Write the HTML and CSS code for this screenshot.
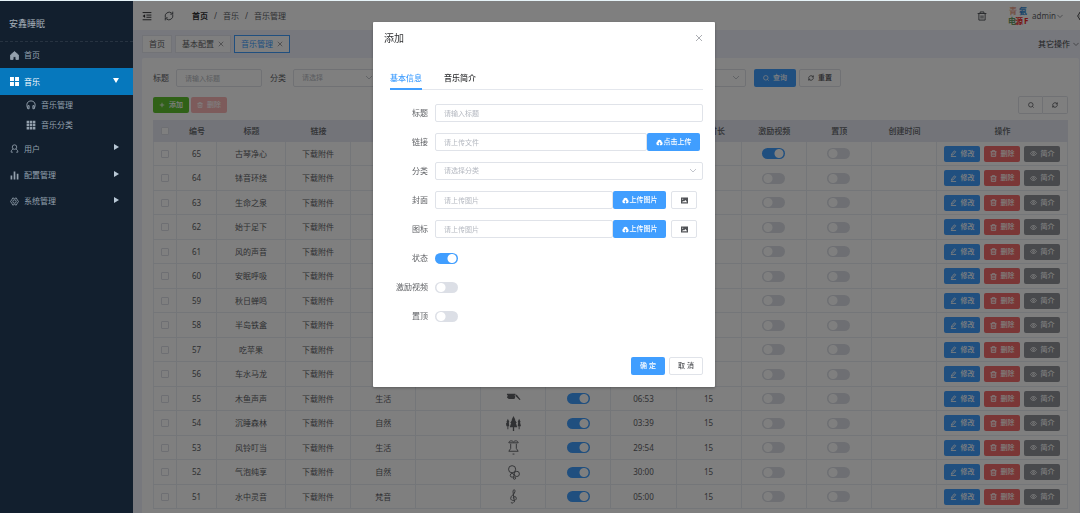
FILE: index.html
```
<!DOCTYPE html>
<html lang="zh-CN">
<head>
<meta charset="utf-8">
<title>音乐管理</title>
<link rel="stylesheet" href="styles.css">
</head>
<body>
<svg class="sprite" aria-hidden="true">
  <symbol id="home" viewBox="0 0 16 16"><path fill="currentColor" d="M8 1 1 7v8h4.500v-5h5v5H15V7z"/></symbol>
  <symbol id="grid4" viewBox="0 0 16 16"><path fill="currentColor" stroke="none" d="M0 0h7v7H0zM9 0h7v7H9zM0 9h7v7H0zM9 9h7v7H9z"/></symbol>
  <symbol id="grid9" viewBox="0 0 16 16"><path fill="currentColor" stroke="none" d="M1 1h4v4H1zM6 1h4v4H6zM11 1h4v4h-4zM1 6h4v4H1zM6 6h4v4H6zM11 6h4v4h-4zM1 11h4v4H1zM6 11h4v4H6zM11 11h4v4h-4z"/></symbol>
  <symbol id="phones" viewBox="0 0 16 16"><path d="M3 14C-1 6 3 1.500 8 1.500S17 6 13 14M3 9h2v5H3zM11 9h2v5h-2z"/></symbol>
  <symbol id="user" viewBox="0 0 16 16"><circle cx="8" cy="5.500" r="4"/><path d="M5.500 9C3 10 2 12 2 14.500h3M10.500 9c2.500 1 3.500 3 3.500 5.500h-3"/></symbol>
  <symbol id="bars" viewBox="0 0 16 16"><path fill="currentColor" stroke="none" d="M1 8h3v7H1zM6.500 1h3v14h-3zM12 5h3v10h-3z"/></symbol>
  <symbol id="gear" viewBox="0 0 16 16"><path d="M5 1.500 8 3l3-1.500L13 5l2 3-2 3-2 3.500L8 13l-3 1.500L3 11 1 8l2-3z"/><circle cx="8" cy="8" r="3"/></symbol>
  <symbol id="fold" viewBox="0 0 16 16"><path d="M1 2.500h14M7 6.500h8M7 10h8M1 14h14"/><path fill="currentColor" stroke="none" d="M5 5v6L1 8z"/></symbol>
  <symbol id="refresh" viewBox="0 0 16 16"><path d="M2 10A6.500 6.500 0 0 1 12 3l2 2M14 6A6.500 6.500 0 0 1 4 13l-2-2M14 1v4h-4M2 15v-4h4"/></symbol>
  <symbol id="trash" viewBox="0 0 16 16"><path d="M1 4h14M5 4V1.500h6V4M3 4v10.500h10V4M6.500 7v5M9.500 7v5"/></symbol>
  <symbol id="down" viewBox="0 0 16 16"><path d="m1 5 7 7 7-7"/></symbol>
  <symbol id="close" viewBox="0 0 16 16"><path d="m2 2 12 12M14 2 2 14"/></symbol>
  <symbol id="plus" viewBox="0 0 16 16"><path d="M8 2v12M2 8h12"/></symbol>
  <symbol id="search" viewBox="0 0 16 16"><circle cx="7.500" cy="7.500" r="6"/><path d="m12 12 3 3"/></symbol>
  <symbol id="edit" viewBox="0 0 16 16"><path d="m4 9 6-7 3 2-6 7-4 1zM2 15h12"/></symbol>
  <symbol id="eye" viewBox="0 0 16 16"><path d="M1 8c4-6 10-6 14 0-4 6-10 6-14 0z"/><circle cx="8" cy="8" r="2"/></symbol>
  <symbol id="cloud" viewBox="0 0 16 16"><path fill="currentColor" stroke="none" fill-rule="evenodd" d="M4 14a4 4 0 0 1-1-7.500 5 5 0 0 1 10 0A4 4 0 0 1 12 14zM7 14h2v-3h2L8 7l-3 4h2z"/></symbol>
  <symbol id="picture" viewBox="0 0 16 16"><path fill="currentColor" stroke="none" fill-rule="evenodd" d="M0 1h16v14H0zM2 12h12l-4-5-3 3-2-1zM3 4v2h2V4z"/></symbol>
  <symbol id="woodfish" viewBox="0 0 16 16"><path fill="currentColor" stroke="none" d="M1 3h9v1.500H9L10 6 9 8.500H3L1 7l1-2.500H1zM10 4h1.500l4 5-1 .5-4-4z"/></symbol>
  <symbol id="forest" viewBox="0 0 16 16"><path fill="currentColor" stroke="none" d="m8 0 2 4h-.5l2 3.500h-1L12 12H8.700v4H7.300v-4H4l1.500-4.500h-1L6.500 4H6zM2 3l1.500 3-.5 1 .5 4h-1v3h-1v-3h-1L0 8l1-1-.5-1zM14 3l1.500 3-.5 1 1 4h-1.500v3h-1v-3h-1l.5-4-.5-1z"/></symbol>
  <symbol id="bell" viewBox="0 0 16 16"><path d="M8 2c-2-2-5-1-5 1h10c0-2-3-3-5-1M5 4v5l-2 3h10l-2-3V4M7 15h2"/></symbol>
  <symbol id="bubbles" viewBox="0 0 16 16"><circle cx="6.500" cy="4.500" r="3.800"/><circle cx="11.500" cy="9.500" r="2.800"/><circle cx="6.500" cy="11" r="2"/><circle cx="9" cy="14" r="1.200"/></symbol>
  <symbol id="clef" viewBox="0 0 16 16"><path d="M8 14c-1 2-3 1-2 0M9 14 7.500 3C7.500 0 10 0 9.500 3S5 7 5 10c0 3 6 3 6 0s-4-2-3 0"/></symbol>
</svg>

<div class="app">
  <aside class="sidebar">
    <div class="brand">安鑫睡眠</div>
    <nav class="menu">
      <a class="item" href="#"><svg class="icon"><use href="#home"/></svg>首页</a>
      <a class="item active" href="#"><svg class="icon"><use href="#grid4"/></svg>音乐<i class="arrow open"></i></a>
      <a class="item sub" href="#"><svg class="icon"><use href="#phones"/></svg>音乐管理</a>
      <a class="item sub" href="#"><svg class="icon"><use href="#grid9"/></svg>音乐分类</a>
      <a class="item" href="#"><svg class="icon"><use href="#user"/></svg>用户<i class="arrow"></i></a>
      <a class="item" href="#"><svg class="icon"><use href="#bars"/></svg>配置管理<i class="arrow"></i></a>
      <a class="item" href="#"><svg class="icon"><use href="#gear"/></svg>系统管理<i class="arrow"></i></a>
    </nav>
  </aside>

  <main class="main">
    <header class="topbar">
      <svg class="icon dark"><use href="#fold"/></svg>
      <svg class="icon"><use href="#refresh"/></svg>
      <nav class="crumbs"><b>首页</b><span>/</span><span>音乐</span><span>/</span><span>音乐管理</span></nav>
      <svg class="icon bin"><use href="#trash"/></svg>
      <div class="avatar"><b class="c1">青</b><b class="c2">氨</b><b class="c3">电</b><b class="c4">源</b><b class="c5">F</b></div>
      <div class="account">admin<svg class="icon tiny"><use href="#down"/></svg></div>
      <svg class="icon cog"><use href="#gear"/></svg>
    </header>

    <div class="pages">
      <a class="page" href="#">首页</a>
      <a class="page" href="#">基本配置<svg class="icon tiny"><use href="#close"/></svg></a>
      <a class="page current" href="#">音乐管理<svg class="icon tiny"><use href="#close"/></svg></a>
      <span class="more">其它操作<svg class="icon tiny"><use href="#down"/></svg></span>
    </div>

    <section class="card">
      <form class="filters">
        <label for="f1">标题</label><input class="field" id="f1" placeholder="请输入标题">
        <label for="f2">分类</label><select class="field" id="f2"><option>请选择</option></select>
        <label for="f3">状态</label><select class="field" id="f3"><option>请选择</option></select>
        <label for="f4">置顶</label><select class="field" id="f4"><option>请选择</option></select>
        <label for="f5">激励视频</label><select class="field" id="f5"><option>请选择</option></select>
        <button type="button" class="btn primary search"><svg class="icon"><use href="#search"/></svg>查询</button>
        <button type="button" class="btn plain reset"><svg class="icon"><use href="#refresh"/></svg>重置</button>
      </form>
      <div class="tools">
        <button class="btn small success"><svg class="icon"><use href="#plus"/></svg>添加</button>
        <button class="btn small danger faded"><svg class="icon"><use href="#trash"/></svg>删除</button>
        <div class="group">
          <button class="btn plain" aria-label="搜索"><svg class="icon"><use href="#search"/></svg></button>
          <button class="btn plain" aria-label="刷新"><svg class="icon"><use href="#refresh"/></svg></button>
        </div>
      </div>
      <table class="list">
        <colgroup><col class="w-check"><col class="w-id"><col class="w-title"><col span="10"><col class="w-ops"></colgroup>
        <thead>
          <tr><th><input type="checkbox" class="check" aria-label="全选"></th><th>编号</th><th>标题</th><th>链接</th><th>分类</th><th>封面</th><th>图标</th><th>状态</th><th>时长</th><th>试听时长</th><th>激励视频</th><th>置顶</th><th>创建时间</th><th>操作</th></tr>
        </thead>
        <tbody id="rows"></tbody>
      </table>
    </section>
  </main>
</div>

<div class="overlay">
  <div class="dialog" role="dialog" aria-labelledby="dialog-title">
    <div class="dialog-head"><h2 id="dialog-title">添加</h2><button class="close" aria-label="关闭"><svg class="icon"><use href="#close"/></svg></button></div>
    <div class="tabs"><button class="tab on">基本信息</button><button class="tab">音乐简介</button></div>
    <form class="form">
      <div class="row"><label for="d1">标题</label><input class="field" id="d1" placeholder="请输入标题"></div>
      <div class="row upload"><label for="d2">链接</label><input class="field" id="d2" placeholder="请上传文件"><button type="button" class="btn primary"><svg class="icon"><use href="#cloud"/></svg>点击上传</button></div>
      <div class="row"><label for="d3">分类</label><select class="field" id="d3"><option>请选择分类</option></select></div>
      <div class="row upload image"><label for="d4">封面</label><input class="field" id="d4" placeholder="请上传图片"><button type="button" class="btn primary"><svg class="icon"><use href="#cloud"/></svg>上传图片</button><button type="button" class="btn plain pick" aria-label="选择封面"><svg class="icon"><use href="#picture"/></svg></button></div>
      <div class="row upload image"><label for="d5">图标</label><input class="field" id="d5" placeholder="请上传图片"><button type="button" class="btn primary"><svg class="icon"><use href="#cloud"/></svg>上传图片</button><button type="button" class="btn plain pick" aria-label="选择图标"><svg class="icon"><use href="#picture"/></svg></button></div>
      <div class="row"><label for="d6">状态</label><input type="checkbox" class="switch" id="d6" checked></div>
      <div class="row"><label for="d7">激励视频</label><input type="checkbox" class="switch" id="d7"></div>
      <div class="row"><label for="d8">置顶</label><input type="checkbox" class="switch" id="d8"></div>
    </form>
    <div class="dialog-foot"><button class="btn primary">确 定</button><button class="btn plain">取 消</button></div>
  </div>
</div>
<script src="app.js"></script>
</body>
</html>
```

FILE: styles.css
```
* { box-sizing: border-box; }
body {
  margin: 0;
  height: 100vh;
  overflow: hidden;
  border-top: 1px solid #e6f3f8;
  background: #eef0fa;
  color: #606266;
  font: 8px/12px "Noto Sans", "Noto Sans CJK SC", sans-serif;
}
a { color: inherit; text-decoration: none; }
button, input, select { font: inherit; color: inherit; margin: 0; }
.sprite { position: absolute; width: 0; height: 0; }
.icon { width: 10px; height: 10px; flex: none; fill: none; stroke: currentColor; stroke-width: 1.5; }
.icon.tiny { width: 6px; height: 6px; }

.app { display: flex; height: 100%; }
.sidebar {
  position: relative;
  z-index: 20;
  flex: 0 0 133px;
  background: #121f2e;
  color: #93a0ad;
}
.brand {
  height: 41px;
  padding: 17px 9px 0;
  border-bottom: 1px dashed #273341;
  font-size: 9px;
  color: #a3adb7;
}
.menu { display: flex; flex-direction: column; }
.item { display: flex; align-items: center; gap: 5px; height: 26px; padding: 0 14px 0 10px; }
.item .icon { width: 9px; height: 9px; }
.item.active { height: 27px; background: #0678bd; color: #fff; }
.item.sub { height: 20px; padding-left: 26px; }
.item.sub .icon { width: 10px; height: 10px; }
.sub + .item:not(.sub) { height: 27px; }
.arrow {
  margin-left: auto;
  margin-bottom: 3px;
  border: solid transparent;
  border-width: 3px 0 3px 5px;
  border-left-color: #b9c8d6;
}
.arrow.open { border-width: 5px 3px 0; border-color: #fff transparent; }

.main { flex: 1; min-width: 0; display: flex; flex-direction: column; }
.topbar { display: flex; align-items: center; height: 29px; padding-left: 9px; background: #fff; overflow: hidden; }
.topbar .icon { margin-right: 12px; color: #505459; }
.topbar .icon.dark { color: #303133; }
.crumbs { display: flex; gap: 6px; margin-left: 6px; margin-right: auto; }
.crumbs b { color: #303133; }
.topbar .bin { margin-right: 19px; }
.avatar { display: flex; flex-wrap: wrap; justify-content: flex-end; width: 23px; font-size: 8px; line-height: 10px; }
.avatar b { width: 8px; }
.avatar .c1 { color: #e8a088; margin-right: 2px; }
.avatar .c2 { color: #2f86d0; margin-right: 2px; }
.avatar .c3 { color: #669a62; width: 7px; }
.avatar .c4 { color: #ee2525; }
.avatar .c5 { color: #ee2525; width: 6px; padding-left: 1px; }
.account { display: flex; align-items: center; gap: 1px; margin-left: 3px; }
.topbar .account .icon { margin-right: 0; }
.topbar .cog { margin: 0 -7px 0 14px; color: #303133; }

.pages { display: flex; align-items: center; gap: 3px; height: 28px; padding: 0 1px 0 9px; }
.page {
  display: flex;
  align-items: center;
  gap: 4px;
  height: 18px;
  padding: 0 6px;
  border: 1px solid #e4e6ee;
  background: #fff;
}
.page.current { border-color: #409eff; color: #409eff; }
.page.current .icon { color: #606266; }
.more { display: flex; align-items: center; gap: 3px; margin-left: auto; color: #404246; }

.card { flex: 1; min-height: 0; margin: 0 1px 0 9px; padding: 11px 11px 0; overflow: hidden; background: #fff; border-radius: 2px 2px 0 0; }
.filters { display: flex; align-items: center; }
.filters label { margin-right: 7px; white-space: nowrap; }
.filters .field { width: 86px; margin-right: 8px; }

.field {
  height: 18px;
  padding: 0 8px;
  border: 1px solid #e0e3e9;
  border-radius: 2px;
  background-color: #fff;
  font-size: 7px;
  line-height: 16px;
  outline: 0;
}
.field::placeholder { color: #b4b8c0; }
select.field {
  appearance: none;
  color: #b4b8c0;
  background: url("data:image/svg+xml,%3Csvg xmlns='http://www.w3.org/2000/svg' viewBox='0 0 8 8'%3E%3Cpath d='m1 2 3 3 3-3' fill='none' stroke='%23b4b8c0' stroke-width='.8'/%3E%3C/svg%3E") no-repeat right 5px center / 8px 8px;
}

.btn {
  display: inline-flex;
  align-items: center;
  justify-content: center;
  gap: 4px;
  height: 18px;
  padding: 0;
  border: 1px solid transparent;
  border-radius: 2px;
  color: #fff;
  font-size: 7px;
  line-height: 10px;
  font-weight: 500;
  white-space: nowrap;
}
.btn .icon { width: 6px; height: 6px; stroke-width: 2; }
.primary { background: #409eff; }
.success { background: #61c22f; }
.danger { background: #f56c6c; }
.info { background: #909399; }
.plain { background: #fff; border-color: #e0e3e9; color: #505256; }
.search { width: 42px; margin-right: 3px; }
.reset { width: 42px; }
.small { width: 36px; height: 16px; }
.faded { background: #fab6b6; }

.tools { display: flex; align-items: center; gap: 2px; height: 18px; margin: 9px 0 6px; }
.group { display: flex; margin-left: auto; }
.group .btn { width: 25px; border-radius: 2px 0 0 2px; }
.group .btn + .btn { border-left: 0; border-radius: 0 2px 2px 0; }

.list { width: 100%; table-layout: fixed; border-collapse: separate; border-spacing: 0; box-shadow: inset 1px 0 #ebeef5; text-align: center; }
.w-check { width: 24px; }
.w-id { width: 40px; }
.w-title { width: 69px; }
.w-ops { width: 131px; }
.list th { height: 22px; padding: 0; background: #e6e9f3; font-weight: 500; line-height: 12px; }
.list td { height: 24px; padding: 0; border: solid #e9ecf3; border-width: 0 1px 1px 0; line-height: 12px; }
.list tr:nth-child(even) td { height: 25px; }
.list .icon { width: 15px; height: 15px; display: block; margin: 0 auto; stroke-width: 1; }
.list .ops { display: flex; justify-content: center; gap: 4px; }
.list .ops .icon { width: 7px; height: 7px; margin: 0; stroke-width: 2; }
.check { appearance: none; display: block; width: 8px; height: 8px; margin: 0 auto; border: 1px solid #dcdfe6; border-radius: 1px; background: #fff; }

.switch {
  appearance: none;
  display: block;
  width: 23px;
  height: 11px;
  border-radius: 6px;
  background: radial-gradient(circle at 6px 50%, #fff 4px, #dcdfe6 5px);
}
.switch:checked { background: radial-gradient(circle at 17px 50%, #fff 4px, #409eff 5px); }
.list .switch { margin: 0 auto; }

.overlay {
  position: fixed;
  z-index: 10;
  inset: 1px 0 0;
  display: flex;
  justify-content: center;
  align-items: flex-start;
  padding: 21px 0 0 8px;
  background: rgba(0, 0, 0, .5);
}
.dialog { width: 342px; padding: 0 12px 12px 11px; background: #fff; border-radius: 1px; box-shadow: 0 1px 3px rgba(0, 0, 0, .3); }
.dialog-head { display: flex; align-items: center; justify-content: space-between; height: 31px; }
.dialog-head h2 { margin: 0; font-size: 10px; font-weight: 400; color: #303133; }
.close { display: flex; padding: 0; border: 0; background: none; color: #909399; }
.close .icon { width: 8px; height: 8px; }
.tabs { display: flex; gap: 22px; height: 22px; margin: 15px 0 14px 6px; box-shadow: inset 0 -1px #e4e7ed; }
.tab { padding: 0; border: 0; border-bottom: 2px solid transparent; background: none; color: #303133; font-weight: 500; }
.tab.on { border-color: #409eff; color: #409eff; }
.form { display: flex; flex-direction: column; gap: 11px; }
.row { display: flex; align-items: center; height: 18px; }
.row label { width: 44px; margin-right: 7px; text-align: right; }
.row .field { flex: 1; min-width: 0; }
.upload { padding-right: 3px; }
.upload .btn { gap: 1px; width: 53px; }
.upload .btn .icon { width: 7px; height: 7px; }
.image { padding-right: 6px; }
.upload .pick { width: 26px; margin-left: 5px; }
.dialog-foot { display: flex; justify-content: flex-end; gap: 4px; margin-top: 32px; }
.dialog-foot .btn { width: 34px; }
```

FILE: app.js
```
const tracks = [
  [65, "古琴净心", "梵音", "clef", "10:00"],
  [64, "钵音环绕", "梵音", "clef", "10:00"],
  [63, "生命之泉", "自然", "bubbles", "10:00"],
  [62, "始于足下", "生活", "bell", "10:00"],
  [61, "风的声音", "自然", "forest", "10:00"],
  [60, "安眠呼吸", "生活", "bell", "10:00"],
  [59, "秋日蝉鸣", "自然", "forest", "10:00"],
  [58, "半岛铁盒", "生活", "bell", "10:00"],
  [57, "吃苹果", "生活", "bell", "10:00"],
  [56, "车水马龙", "生活", "bell", "10:00"],
  [55, "木鱼声声", "生活", "woodfish", "06:53"],
  [54, "沉睡森林", "自然", "forest", "03:39"],
  [53, "风铃叮当", "生活", "bell", "29:54"],
  [52, "气泡纯享", "自然", "bubbles", "30:00"],
  [51, "水中灵音", "梵音", "clef", "05:00"]
];

const icon = name => `<svg class="icon"><use href="#${name}"/></svg>`;
const toggle = (label, on) => `<input type="checkbox" class="switch" aria-label="${label}"${on ? " checked" : ""}>`;
const button = (kind, name, text) => `<button class="btn small ${kind}">${icon(name)}${text}</button>`;

document.getElementById("rows").innerHTML = tracks.map(([id, title, type, pic, time]) => `
  <tr>
    <td><input type="checkbox" class="check" aria-label="选择${id}"></td>
    <td>${id}</td><td>${title}</td><td><a href="#">下载附件</a></td><td>${type}</td><td></td>
    <td>${icon(pic)}</td><td>${toggle("状态", true)}</td><td>${time}</td><td>15</td>
    <td>${toggle("激励视频", id === 65)}</td><td>${toggle("置顶", false)}</td><td></td>
    <td><div class="ops">${button("primary", "edit", "修改")}${button("danger", "trash", "删除")}${button("info", "eye", "简介")}</div></td>
  </tr>`).join("");
```
